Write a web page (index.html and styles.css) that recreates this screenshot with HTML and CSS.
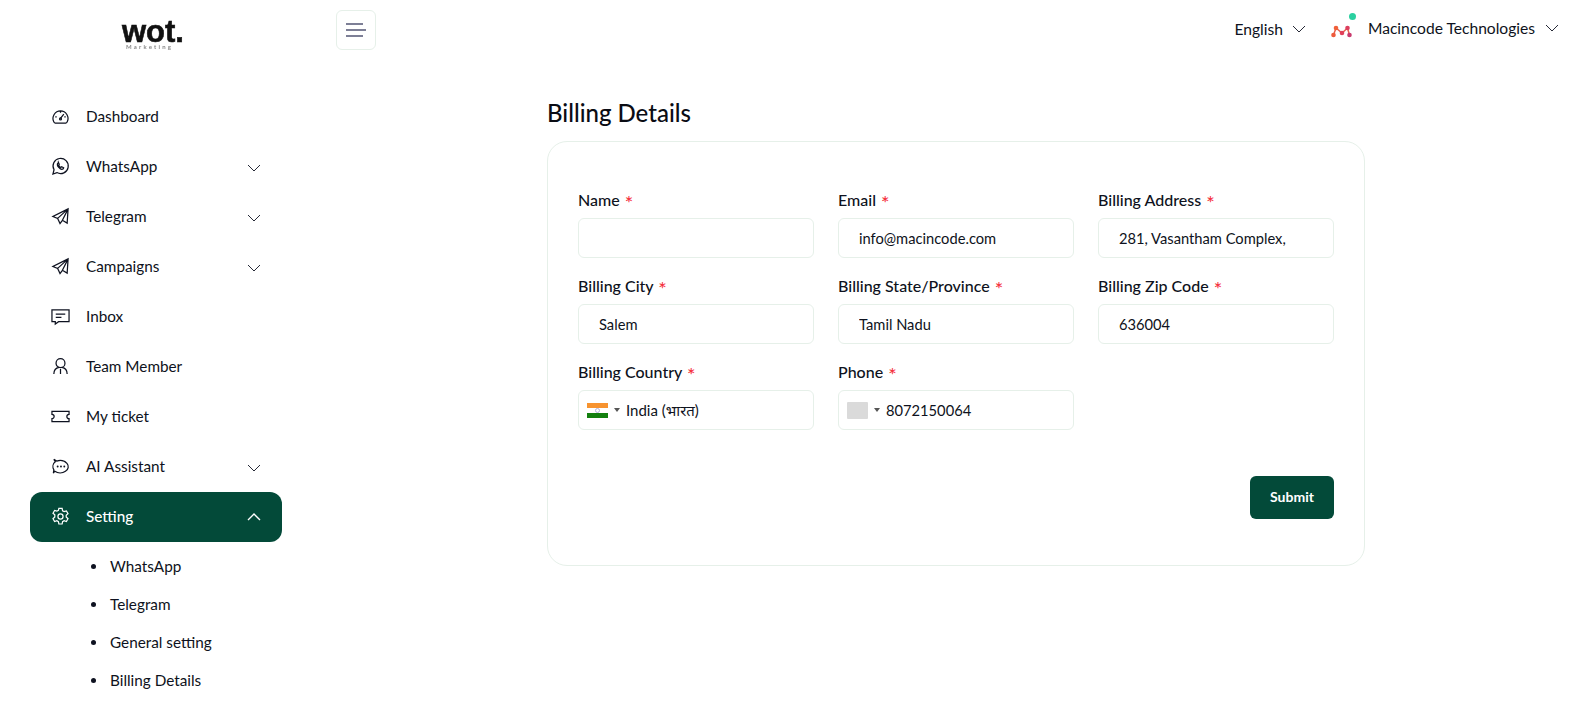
FILE: index.html
```html
<!DOCTYPE html>
<html>
  <head>
    <title>Billing Details</title>
    <meta charset="UTF-8">
    <link rel="stylesheet" href="styles.css">
  </head>
  <body>
    <header class="topbar">
      <div class="logo-wrap">
        <svg class="logo" width="64" height="30" viewBox="0 0 64 30">
          <text class="logo-word" x="0" y="22">wot.</text>
          <text class="logo-sub" x="4" y="29">Marketing</text>
        </svg>
      </div>
      <button class="menu-btn" type="button">
        <svg width="20" height="14" viewBox="0 0 20 14"><path d="M0 1H17M0 7H20M0 13H17" stroke="#7d7f96" stroke-width="2" fill="none"/></svg>
      </button>
      <div class="top-right">
        <div class="lang">English
          <svg class="chev" width="14" height="8" viewBox="0 0 14 8"><path d="M1 1l6 6 6-6"/></svg>
        </div>
        <div class="account">
          <span class="account-logo">
            <svg width="21" height="13" viewBox="0 0 21 13"><path d="M2.500 10L5 3l6 5 5.500-5 2 7" stroke="#e8604c" stroke-width="1.500" fill="none"/><circle cx="2.500" cy="10" r="2.300" fill="#ee5a3c"/><circle cx="5" cy="3" r="2.300" fill="#f0603a"/><circle cx="11" cy="8" r="2.300" fill="#e0405a"/><circle cx="16.500" cy="3" r="2.300" fill="#dc3f5e"/><circle cx="18.500" cy="10" r="2.300" fill="#c93a6e"/></svg>
            <span class="online-dot"></span>
          </span>
          <span class="account-name">Macincode Technologies</span>
          <svg class="chev" width="14" height="8" viewBox="0 0 14 8"><path d="M1 1l6 6 6-6"/></svg>
        </div>
      </div>
    </header>

    <div class="layout">
      <nav class="sidebar">
        <a class="nav-item">
          <svg class="nav-icon" viewBox="0 0 20 20"><path d="M4.500 17h11a2 2 0 0 0 1.600-1.500 7.900 7.900 0 1 0-14.200 0A2 2 0 0 0 4.500 17zM10 12l3.500-4.500M10 4.500v1.500M4.500 10.500H6M14 10.500h1.500"/><circle cx="10" cy="12.500" r="1"/></svg>
          <span>Dashboard</span>
        </a>
        <a class="nav-item">
          <svg class="nav-icon" viewBox="0 0 20 20"><path d="M2 18l1.200-4.600a8 8 0 1 1 3 3zM7.500 6.300c-1.300 1-1 2.800.6 4.600s3.400 2.600 4.800 1.500l.4-1.100-2.100-1-.9.700c-1-.4-1.900-1.400-2.300-2.500l.7-.8-1-2.300z"/></svg>
          <span>WhatsApp</span>
          <svg class="chev" width="14" height="8" viewBox="0 0 14 8"><path d="M1 1l6 6 6-6"/></svg>
        </a>
        <a class="nav-item">
          <svg class="nav-icon" viewBox="0 0 20 20"><path d="M18 2L2 10l5 2 2.500 5.500 2.500-3.500 5 3zM18 2L7 12M18 2L12 14"/></svg>
          <span>Telegram</span>
          <svg class="chev" width="14" height="8" viewBox="0 0 14 8"><path d="M1 1l6 6 6-6"/></svg>
        </a>
        <a class="nav-item">
          <svg class="nav-icon" viewBox="0 0 20 20"><path d="M18 2L2 10l5 2 2.500 5.500 2.500-3.500 5 3zM18 2L7 12M18 2L12 14"/></svg>
          <span>Campaigns</span>
          <svg class="chev" width="14" height="8" viewBox="0 0 14 8"><path d="M1 1l6 6 6-6"/></svg>
        </a>
        <a class="nav-item">
          <svg class="nav-icon" viewBox="0 0 20 20"><path d="M1 3h18v12.500H8L4.500 18v-2.500H1zM5 7.500h10M5 11h6"/></svg>
          <span>Inbox</span>
        </a>
        <a class="nav-item">
          <svg class="nav-icon" viewBox="0 0 20 20"><circle cx="10" cy="6.500" r="4.700"/><path d="M3 18c0-4.500 2.500-6.500 5.500-7M17 18c0-4.500-2.500-6.500-5.500-7M10 12.500V18"/></svg>
          <span>Team Member</span>
        </a>
        <a class="nav-item">
          <svg class="nav-icon" viewBox="0 0 20 20"><path d="M1 4.500h18v3.200a2.300 2.300 0 0 0 0 4.600v3.200H1v-3.200a2.300 2.300 0 0 0 0-4.600z"/></svg>
          <span>My ticket</span>
        </a>
        <a class="nav-item">
          <svg class="nav-icon" viewBox="0 0 20 20"><path d="M3 2.500l3 1.800A8.500 6.500 0 1 1 4 15l-1.500 2 .5-3.500A6.500 6.500 0 0 1 4.500 5z"/><circle class="icon-fill" cx="7" cy="10" r="1"/><circle class="icon-fill" cx="10.500" cy="10" r="1"/><circle class="icon-fill" cx="14" cy="10" r="1"/></svg>
          <span>AI Assistant</span>
          <svg class="chev" width="14" height="8" viewBox="0 0 14 8"><path d="M1 1l6 6 6-6"/></svg>
        </a>
        <a class="nav-item active">
          <svg class="nav-icon" viewBox="0 0 20 20"><circle cx="10" cy="10" r="2.700"/><path d="M8.300 1.500h3.400l.5 2.500 1.600.9 2.400-.8 1.700 3-1.900 1.700v1.800l1.900 1.700-1.700 3-2.400-.8-1.600.9-.5 2.500H8.300l-.5-2.500-1.600-.9-2.400.8-1.700-3 1.900-1.700V8.300L2.100 6.600l1.700-3 2.400.8 1.600-.9z"/></svg>
          <span>Setting</span>
          <svg class="chev" width="14" height="8" viewBox="0 0 14 8"><path d="M1 7l6-6 6 6"/></svg>
        </a>
        <ul class="subnav">
          <li>WhatsApp</li>
          <li>Telegram</li>
          <li>General setting</li>
          <li>Billing Details</li>
        </ul>
      </nav>

      <main class="content">
        <h1 class="page-title">Billing Details</h1>
        <form class="card">
          <div class="form-grid">
            <div class="field">
              <label>Name <em>*</em></label>
              <input class="input" type="text">
            </div>
            <div class="field">
              <label>Email <em>*</em></label>
              <input class="input" type="text" value="info@macincode.com">
            </div>
            <div class="field">
              <label>Billing Address <em>*</em></label>
              <input class="input" type="text" value="281, Vasantham Complex,">
            </div>
            <div class="field">
              <label>Billing City <em>*</em></label>
              <input class="input" type="text" value="Salem">
            </div>
            <div class="field">
              <label>Billing State/Province <em>*</em></label>
              <input class="input" type="text" value="Tamil Nadu">
            </div>
            <div class="field">
              <label>Billing Zip Code <em>*</em></label>
              <input class="input" type="text" value="636004">
            </div>
            <div class="field">
              <label>Billing Country <em>*</em></label>
              <div class="input flag-input">
                <svg class="flag" width="21" height="15" viewBox="0 0 21 15"><rect width="21" height="5" fill="#f7932f"/><rect y="5" width="21" height="5" fill="#fff"/><rect y="10" width="21" height="5" fill="#14800f"/><circle cx="10.500" cy="7.500" r="2" fill="none" stroke="#b4b4dc"/></svg>
                <span class="caret"></span>
                <span class="flag-text">India (भारत)</span>
              </div>
            </div>
            <div class="field">
              <label>Phone <em>*</em></label>
              <div class="input flag-input">
                <span class="flag-empty"></span>
                <span class="caret"></span>
                <span>8072150064</span>
              </div>
            </div>
          </div>
          <div class="form-actions">
            <button class="submit-btn" type="button">Submit</button>
          </div>
        </form>
      </main>
    </div>
  </body>
</html>
```

FILE: styles.css
```css
* {
  box-sizing: border-box;
}

html, body {
  height: 703px;
  overflow: hidden;
}

body {
  margin: 0;
  background: #fff;
  color: #0e1220;
  font-family: "Lato", "Noto Sans", sans-serif;
  font-size: 15.3px;
}

svg {
  flex: none;
}

.chev path {
  fill: none;
  stroke: currentColor;
  stroke-width: 0.9;
}

/* top bar */
.topbar {
  display: flex;
  align-items: flex-start;
  height: 70px;
  padding-top: 10px;
}

.logo-wrap {
  width: 336px;
  padding: 10px 0 0 122px;
}

.logo {
  display: block;
  overflow: visible;
  filter: blur(0.4px);
}

.logo-word {
  font-family: "Liberation Sans", sans-serif;
  font-size: 31px;
  font-weight: 700;
  fill: #111;
  stroke: #111;
  stroke-width: 0.6;
}

.logo-sub {
  font-size: 6px;
  font-weight: 700;
  letter-spacing: 2.2px;
  fill: #888;
}

.menu-btn {
  display: flex;
  align-items: center;
  justify-content: center;
  width: 40px;
  height: 40px;
  padding: 0;
  background: #fff;
  border: 1px solid #e6f0e9;
  border-radius: 6px;
}

.top-right {
  display: flex;
  align-items: center;
  margin-left: auto;
  padding: 8px 21px 0 0;
  font-size: 15.600px;
}

.lang {
  display: flex;
  align-items: center;
  gap: 9px;
  margin-right: 25px;
  margin-top: 2px;
}

.account {
  display: flex;
  align-items: center;
}

.account-logo {
  position: relative;
  display: block;
  width: 21px;
  height: 13px;
  margin-right: 16px;
  margin-top: 2px;
}

.online-dot {
  position: absolute;
  top: -10px;
  left: 18px;
  width: 7px;
  height: 7px;
  border-radius: 50%;
  background: #2bd0a0;
}

.account-name {
  margin-right: 10px;
}

/* sidebar */
.layout {
  display: flex;
}

.sidebar {
  flex: none;
  width: 547px;
  padding: 22px 0 0 30px;
}

.nav-item {
  display: flex;
  align-items: center;
  width: 252px;
  height: 50px;
  padding: 0 21px 2px 21px;
  border-radius: 12px;
}

.nav-item span {
  flex: 1;
}

.nav-item .chev {
  margin-top: 3px;
}

.nav-icon {
  width: 19px;
  height: 19px;
  margin-right: 16px;
  fill: none;
  stroke: currentColor;
  stroke-width: 1.3;
}

.icon-fill {
  fill: currentColor;
  stroke: none;
}

.nav-item.active {
  background: #034a39;
  color: #fff;
  font-weight: 500;
}

.nav-item.active .chev {
  margin-top: 1px;
}

.nav-item.active .chev path {
  stroke-width: 1.4;
}

.subnav {
  margin: 0;
  padding: 6px 0 0 80px;
  list-style: none;
}

.subnav li {
  position: relative;
  height: 38px;
  line-height: 36px;
}

.subnav li::before {
  content: "";
  position: absolute;
  left: -19px;
  top: 16px;
  width: 5px;
  height: 5px;
  border-radius: 50%;
  background: #0e1220;
}

/* billing form */
.content {
  flex: none;
  width: 818px;
}

.page-title {
  margin: 28px 0 13px;
  font-size: 24px;
  font-weight: 500;
  line-height: 30px;
  color: #0a0c14;
}

.card {
  height: 425px;
  padding: 46px 30px 0;
  border: 1px solid #e6f0e9;
  border-radius: 20px;
}

.form-grid {
  display: grid;
  grid-template-columns: repeat(3, 236px);
  column-gap: 24px;
  row-gap: 16px;
}

.field label {
  display: block;
  height: 30px;
  font-size: 16px;
  line-height: 24px;
  font-weight: 500;
}

.field em {
  margin-left: 1px;
  font-size: 20px;
  line-height: 0;
  vertical-align: -4px;
  font-style: normal;
  color: #f5333f;
}

.input {
  display: block;
  width: 100%;
  height: 40px;
  padding: 0 20px;
  background: #fff;
  border: 1px solid #e6f0e9;
  border-radius: 6px;
  color: #0e1220;
  font-family: inherit;
  font-size: 14.700px;
  outline: none;
}

.flag-input {
  display: flex;
  align-items: center;
  padding: 0 8px;
}

.flag-text {
  font-size: 15px;
}

.flag-empty {
  width: 21px;
  height: 17px;
  background: #dadada;
  border-radius: 1px;
}

.caret {
  width: 0;
  height: 0;
  margin: 0 6px;
  border-left: 3px solid transparent;
  border-right: 3px solid transparent;
  border-top: 4px solid #555;
}

.form-actions {
  display: flex;
  justify-content: flex-end;
  margin-top: 46px;
}

.submit-btn {
  width: 84px;
  height: 43px;
  padding: 0 0 2px;
  background: #034a39;
  border: 0;
  border-radius: 6px;
  color: #fff;
  font-family: inherit;
  font-size: 14px;
  font-weight: 700;
}
```
